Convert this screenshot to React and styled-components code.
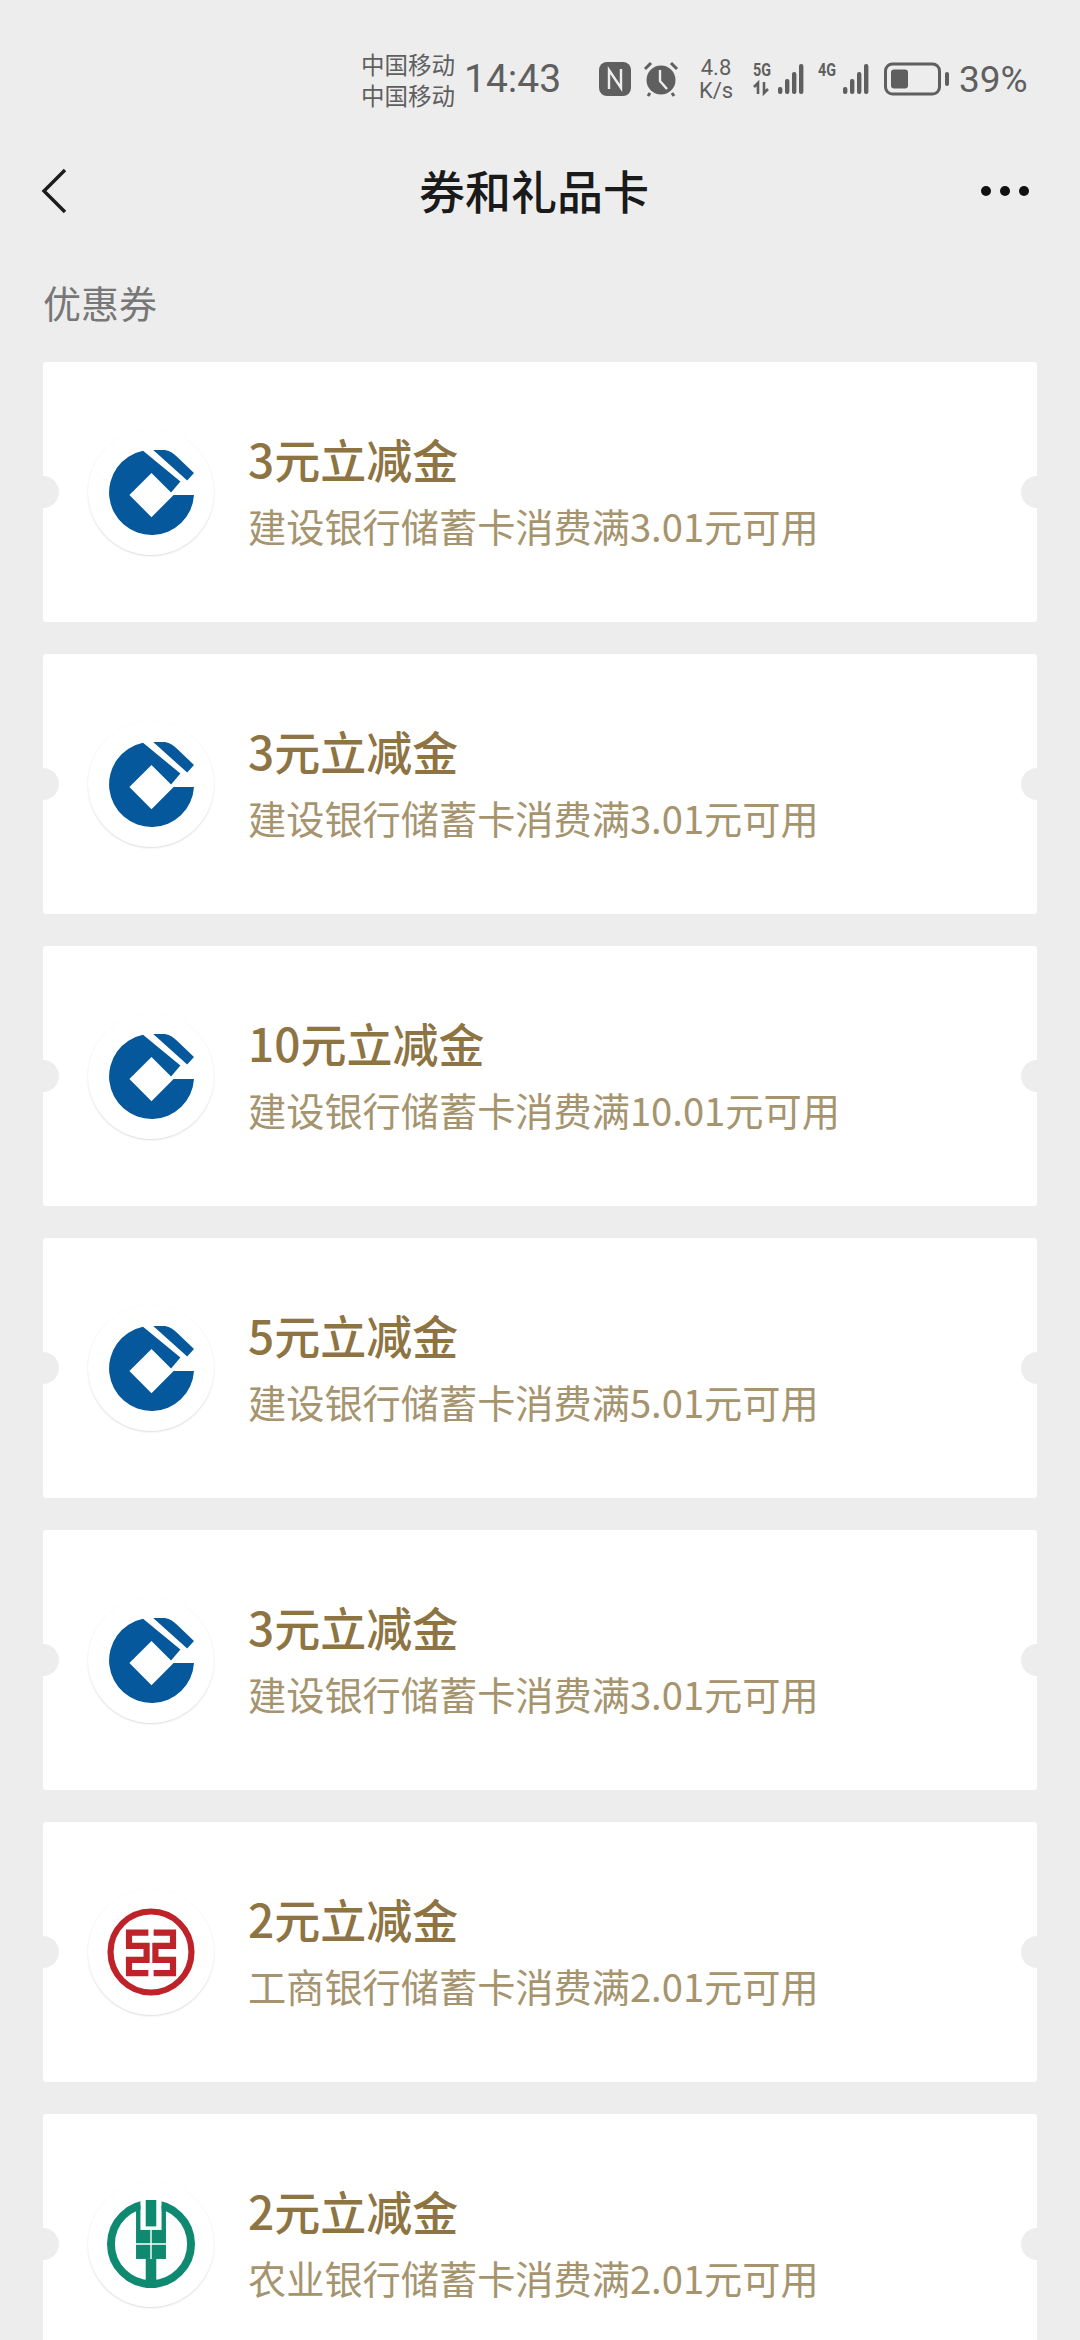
import styled, { createGlobalStyle } from 'styled-components';

const GlobalStyle = createGlobalStyle`
  html, body {
    margin: 0;
    padding: 0;
    background: #ededed;
  }
  body {
    font-family: "Noto Sans CJK SC", Roboto, sans-serif;
  }
`;

const coupons = [
  { id: 1, bank: 'ccb', title: '3元立减金', desc: '建设银行储蓄卡消费满3.01元可用' },
  { id: 2, bank: 'ccb', title: '3元立减金', desc: '建设银行储蓄卡消费满3.01元可用' },
  { id: 3, bank: 'ccb', title: '10元立减金', desc: '建设银行储蓄卡消费满10.01元可用' },
  { id: 4, bank: 'ccb', title: '5元立减金', desc: '建设银行储蓄卡消费满5.01元可用' },
  { id: 5, bank: 'ccb', title: '3元立减金', desc: '建设银行储蓄卡消费满3.01元可用' },
  { id: 6, bank: 'icbc', title: '2元立减金', desc: '工商银行储蓄卡消费满2.01元可用' },
  { id: 7, bank: 'abc', title: '2元立减金', desc: '农业银行储蓄卡消费满2.01元可用' },
];

const CcbMark = () => (
  <LogoSvg $size={85} viewBox="0 0 100 100">
    <path fill="#04589b" d="M40 1 L84 37 L73 50 L50 27 L24 53 L50 79 L76 53 L100 53 A50 50 0 1 1 40 1 Z" />
    <path fill="#04589b" d="M52 0 L66 0 C72 1 76 4 80 8 L100 27 L92 36 Z" />
  </LogoSvg>
);

const IcbcMark = () => (
  <LogoSvg $size={88} viewBox="0 0 100 100">
    <circle cx="50" cy="50" r="46" fill="none" stroke="#bd2329" strokeWidth="7" />
    <path
      fill="none"
      stroke="#bd2329"
      strokeWidth="7"
      d="M47 28 H25 V43 H45 V59 H25 V74 H47 M53 28 H75 V43 H55 V59 H75 V74 H53"
    />
  </LogoSvg>
);

const AbcMark = () => (
  <LogoSvg $size={88} viewBox="0 0 100 100">
    <circle cx="50" cy="50" r="45.5" fill="none" stroke="#0f8a70" strokeWidth="9" />
    <rect x="38" y="0" width="24" height="34" fill="#fff" />
    <rect x="33" y="6" width="5" height="30" fill="#0f8a70" />
    <rect x="62" y="6" width="5" height="30" fill="#0f8a70" />
    <rect x="44" y="0" width="12" height="30" fill="#0f8a70" />
    <rect x="33" y="34" width="34" height="33" fill="#0f8a70" />
    <rect x="44" y="67" width="12" height="33" fill="#0f8a70" />
    <path stroke="#fff" strokeWidth="1.6" d="M50 34 V67 M33 50 H67" />
  </LogoSvg>
);

const marks = { ccb: CcbMark, icbc: IcbcMark, abc: AbcMark };

const NfcIcon = () => (
  <svg width="32" height="34" viewBox="0 0 32 34">
    <rect width="32" height="34" rx="8" fill="#5f5f5f" />
    <path fill="none" stroke="#ededed" strokeWidth="2.4" d="M10 27 V8 L22 26 V7" />
  </svg>
);

const AlarmIcon = () => (
  <svg width="36" height="36" viewBox="0 0 36 36">
    <circle cx="18" cy="19" r="14.5" fill="#5f5f5f" />
    <path fill="none" stroke="#ededed" strokeWidth="2.4" d="M17 9 V20 L24 28" />
    <path fill="none" stroke="#5f5f5f" strokeWidth="3" d="M2 8 L8 2 M34 8 L28 2 M7 32 L5 35 M29 32 L31 35" />
  </svg>
);

const SignalBars = () => (
  <g fill="#5f5f5f">
    <rect x="25" y="25" width="4.4" height="7" rx="2" />
    <rect x="32" y="17" width="4.4" height="15" rx="2" />
    <rect x="39" y="10" width="4.4" height="22" rx="2" />
    <rect x="46" y="2" width="4.4" height="30" rx="2" />
  </g>
);

const Signal5g = () => (
  <svg width="54" height="42" viewBox="0 -4 54 42">
    <text x="0" y="14" fontFamily="Roboto, sans-serif" fontWeight="700" fontSize="18" fill="#5f5f5f" textLength="18" lengthAdjust="spacingAndGlyphs">
      5G
    </text>
    <path fill="none" stroke="#5f5f5f" strokeWidth="2.6" d="M5 32 V21 L1 25 M11 20 V31 L15 27" />
    <SignalBars />
  </svg>
);

const Signal4g = () => (
  <svg width="55" height="42" viewBox="0 -4 55 42">
    <text x="0" y="14" fontFamily="Roboto, sans-serif" fontWeight="700" fontSize="18" fill="#5f5f5f" textLength="18" lengthAdjust="spacingAndGlyphs">
      4G
    </text>
    <SignalBars />
  </svg>
);

const BatteryIcon = () => (
  <svg width="66" height="34" viewBox="0 0 66 34">
    <rect x="1.5" y="2" width="54" height="30" rx="7" fill="none" stroke="#5f5f5f" strokeWidth="3" />
    <rect x="7" y="7.5" width="17" height="19" rx="3" fill="#5f5f5f" />
    <rect x="61" y="10" width="4" height="14" rx="2" fill="#5f5f5f" />
  </svg>
);

const App = () => (
  <Page>
    <GlobalStyle />
    <StatusBar>
      <Carrier>
        <span>中国移动</span>
        <span>中国移动</span>
      </Carrier>
      <Clock>14:43</Clock>
      <StatusSlot $gap={38}>
        <NfcIcon />
      </StatusSlot>
      <StatusSlot $gap={12}>
        <AlarmIcon />
      </StatusSlot>
      <NetSpeed>
        <span>4.8</span>
        <span>K/s</span>
      </NetSpeed>
      <StatusSlot $gap={19}>
        <Signal5g />
      </StatusSlot>
      <StatusSlot $gap={11}>
        <Signal4g />
      </StatusSlot>
      <StatusSlot $gap={11}>
        <BatteryIcon />
      </StatusSlot>
      <BatteryText>39%</BatteryText>
    </StatusBar>

    <Header>
      <BackButton>
        <svg width="26" height="46" viewBox="0 0 26 46">
          <path d="M24 2 L3 23 L24 44" fill="none" stroke="#1c1c1c" strokeWidth="3.4" />
        </svg>
      </BackButton>
      <Title>券和礼品卡</Title>
      <MoreButton>
        <Dot />
        <Dot />
        <Dot />
      </MoreButton>
    </Header>

    <SectionLabel>优惠券</SectionLabel>

    <CouponList>
      {coupons.map((coupon) => {
        const Mark = marks[coupon.bank];
        return (
          <Coupon key={coupon.id}>
            <Logo>
              <Mark />
            </Logo>
            <CouponText>
              <CouponTitle>{coupon.title}</CouponTitle>
              <CouponDesc>{coupon.desc}</CouponDesc>
            </CouponText>
          </Coupon>
        );
      })}
    </CouponList>
  </Page>
);

export default App;

const Page = styled.div`
  width: 1080px;
  height: 2340px;
  overflow: hidden;
  background: #ededed;
`;

const StatusBar = styled.div`
  display: flex;
  align-items: center;
  height: 158px;
  padding-left: 361px;
  color: #5f5f5f;
`;

const Carrier = styled.div`
  display: flex;
  flex-direction: column;
  gap: 7px;
  width: 94px;
  font-size: 23.5px;
  line-height: 24px;
  white-space: nowrap;
`;

const Clock = styled.div`
  width: 97px;
  margin-left: 9px;
  font-family: Roboto, sans-serif;
  font-size: 39px;
`;

const StatusSlot = styled.div`
  display: flex;
  margin-left: ${(props) => props.$gap}px;
`;

const NetSpeed = styled.div`
  display: flex;
  flex-direction: column;
  align-items: center;
  gap: 1px;
  width: 36px;
  margin-left: 19px;
  font-family: Roboto, sans-serif;
  font-size: 22px;
  line-height: 22px;
`;

const BatteryText = styled.div`
  margin-left: 9px;
  font-family: Roboto, sans-serif;
  font-size: 37px;
`;

const Header = styled.div`
  display: flex;
  align-items: center;
  justify-content: space-between;
  height: 66px;
  padding: 0 51px 0 41px;
`;

const BackButton = styled.div`
  display: flex;
  width: 46px;
`;

const Title = styled.div`
  flex: 1;
  padding-bottom: 5px;
  text-align: center;
  font-size: 46px;
  font-weight: 500;
  color: #1a1a1a;
`;

const MoreButton = styled.div`
  display: flex;
  justify-content: space-between;
  width: 48px;
`;

const Dot = styled.span`
  width: 10px;
  height: 10px;
  border-radius: 50%;
  background: #111;
`;

const SectionLabel = styled.div`
  margin: 53px 0 35px 43px;
  font-size: 38px;
  line-height: 50px;
  color: #777;
`;

const CouponList = styled.div`
  display: flex;
  flex-direction: column;
  gap: 32px;
  padding: 0 43px;
`;

const Coupon = styled.div`
  position: relative;
  display: flex;
  flex-shrink: 0;
  align-items: center;
  gap: 34px;
  height: 260px;
  padding-left: 45px;
  background: #fff;
  border-radius: 3px;

  &::before,
  &::after {
    content: '';
    position: absolute;
    top: 114px;
    width: 32px;
    height: 32px;
    border-radius: 50%;
    background: #ededed;
  }
  &::before {
    left: -16px;
  }
  &::after {
    right: -16px;
  }
`;

const Logo = styled.div`
  display: flex;
  align-items: center;
  justify-content: center;
  width: 126px;
  height: 126px;
  border-radius: 50%;
  background: #fff;
  box-shadow: 0 1px 2px rgba(0, 0, 0, 0.14);
`;

const LogoSvg = styled.svg`
  width: ${(props) => props.$size}px;
  height: ${(props) => props.$size}px;
`;

const CouponText = styled.div`
  display: flex;
  flex-direction: column;
  gap: 16px;
  padding-bottom: 4px;
`;

const CouponTitle = styled.div`
  font-size: 46px;
  font-weight: 500;
  line-height: 56px;
  color: #8d7442;
`;

const CouponDesc = styled.div`
  font-size: 38.2px;
  line-height: 48px;
  color: #a5946d;
`;
